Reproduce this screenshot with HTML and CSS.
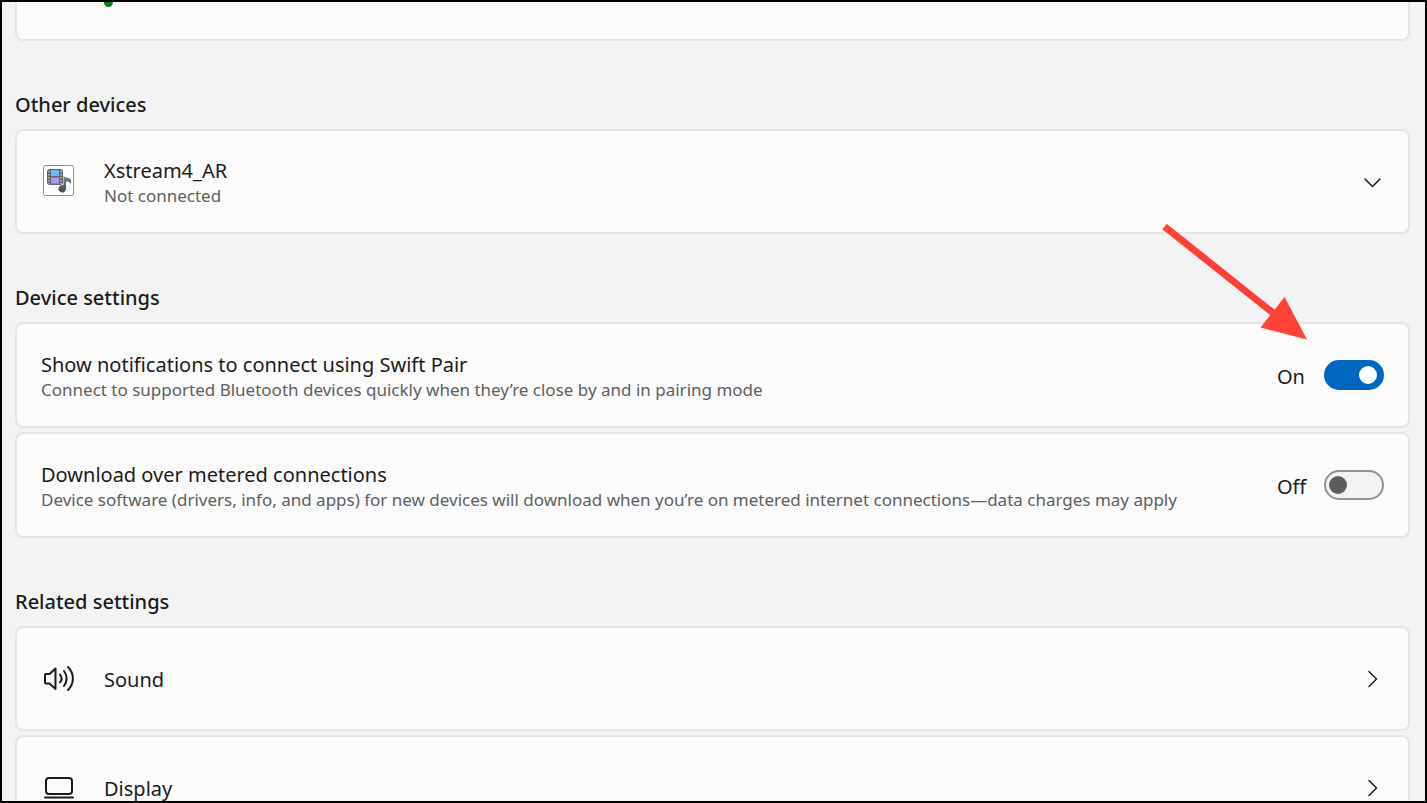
FILE: index.html
```html
<!DOCTYPE html>
<html lang="en">
<head>
<meta charset="UTF-8">
<meta name="viewport" content="width=device-width, initial-scale=1.0">
<title>Bluetooth &amp; devices</title>
<link rel="stylesheet" href="styles.css">
</head>
<body>

<main class="settings">
    <div class="card card-cut">
        <span class="status-dot"></span>
    </div>

    <section>
        <h2>Other devices</h2>
        <button class="card" type="button" aria-expanded="false">
            <svg class="icon" viewBox="0 0 36 36">
                <defs>
                    <linearGradient id="film" x1="0" y1="0" x2="1" y2="1">
                        <stop offset="0" stop-color="#4fc3f7"/>
                        <stop offset="1" stop-color="#7fb4ff"/>
                    </linearGradient>
                    <linearGradient id="film2" x1="0" y1="0" x2="1" y2="1">
                        <stop offset="0" stop-color="#8fa0ff"/>
                        <stop offset="1" stop-color="#cf8cf5"/>
                    </linearGradient>
                    <linearGradient id="note" x1="0" y1="0" x2="0" y2="1">
                        <stop offset="0" stop-color="#78858d"/>
                        <stop offset="1" stop-color="#3f4a52"/>
                    </linearGradient>
                </defs>
                <rect x="2.5" y="1.5" width="30" height="30" rx="2" fill="#fff" stroke="#8f8f8f"/>
                <rect x="6" y="5" width="16" height="16" rx="3" fill="#66666a"/>
                <rect x="10" y="6" width="8" height="6" fill="url(#film)"/>
                <rect x="10" y="13.5" width="8" height="6" fill="url(#film2)"/>
                <path d="M8 7v13M20 7v13" stroke="#b9b9b9" stroke-width="1.5" stroke-dasharray="1.5 1.5"/>
                <path d="M22.5 12c1.5 2 7 1.5 7.5 4v4c-1-2-3-2.500-5-2.500v7.500a3.800 3.800 0 1 1-2.500-3.800z" fill="url(#note)"/>
            </svg>
            <span class="text">
                <span class="title">Xstream4_AR</span>
                <span class="detail">Not connected</span>
            </span>
            <svg class="chevron" viewBox="0 0 24 24"><path d="M5 9l7.5 7.5 7.5-7.5"/></svg>
        </button>
    </section>

    <section>
        <h2>Device settings</h2>
        <div class="card card-toggle">
            <label class="text" for="swift-pair">
                <span class="title">Show notifications to connect using Swift Pair</span>
                <span class="detail">Connect to supported Bluetooth devices quickly when they’re close by and in pairing mode</span>
            </label>
            <span class="state">On</span>
            <input class="toggle" type="checkbox" role="switch" id="swift-pair" checked>
            <svg class="arrow" viewBox="0 0 146 116">
                <path d="M2.5 2.5L113 90.5" stroke="#ff4136" stroke-width="7"/>
                <path d="M145 115.5L98.5 103.5 122.5 73z" fill="#ff4136"/>
            </svg>
        </div>
        <div class="card card-toggle">
            <label class="text" for="metered">
                <span class="title">Download over metered connections</span>
                <span class="detail">Device software (drivers, info, and apps) for new devices will download when you’re on metered internet connections—data charges may apply</span>
            </label>
            <span class="state">Off</span>
            <input class="toggle" type="checkbox" role="switch" id="metered">
        </div>
    </section>

    <section>
        <h2>Related settings</h2>
        <a class="card" href="#sound">
            <svg class="icon line" viewBox="0 0 36 36">
                <path d="M4 14a1 1 0 0 1 1-1h3.500l6-5.500v20.500l-6-5.500H5a1 1 0 0 1-1-1z"/>
                <path d="M19 13.500c2 2.500 2 5.500 0 8M23 10c3.500 4.500 3.500 10.500 0 15M27 6c6.500 6.500 6.500 16.500 0 23"/>
            </svg>
            <span class="title">Sound</span>
            <svg class="chevron" viewBox="0 0 24 24"><path d="M9 4.500l7.500 7.500-7.500 7.500"/></svg>
        </a>
        <a class="card" href="#display">
            <svg class="icon line" viewBox="0 0 36 36">
                <rect x="5" y="8" width="26" height="16" rx="3"/>
                <path d="M4 27.500h28"/>
            </svg>
            <span class="title">Display</span>
            <svg class="chevron" viewBox="0 0 24 24"><path d="M9 4.500l7.500 7.500-7.500 7.500"/></svg>
        </a>
    </section>
</main>

</body>
</html>
```

FILE: styles.css
```css
* {
    box-sizing: border-box;
}
body {
    height: 100vh;
    margin: 0;
    overflow: hidden;
    border: 2px solid #000;
    background-color: #f3f3f3;
    color: #1b1b1b;
    font-family: "Segoe UI", "Noto Sans", sans-serif;
    font-size: 20px;
    line-height: 28px;
}
.settings {
    padding: 0 15px 0 13px;
}
h2 {
    margin: 50px 0 10px;
    font-size: 20px;
    font-weight: 500;
}
.card {
    position: relative;
    display: flex;
    align-items: center;
    width: 100%;
    min-height: 105px;
    padding: 0 24px;
    border: 2px solid #e5e5e5;
    border-radius: 8px;
    background-color: #fbfbfb;
    color: inherit;
    font: inherit;
    text-align: left;
    text-decoration: none;
}
.card + .card {
    margin-top: 4px;
}
.card-toggle {
    min-height: 106px;
}
/* card scrolled under the top edge */
.card-cut {
    align-items: flex-start;
    min-height: 39px;
    padding-left: 87px;
    border-top: 0;
    border-radius: 0 0 8px 8px;
    overflow: hidden;
}
.status-dot {
    width: 9px;
    height: 9px;
    margin-top: -4px;
    border-radius: 50%;
    background-color: #107c10;
}
.icon {
    flex: none;
    width: 36px;
    height: 36px;
    margin-right: 27px;
}
.line,
.chevron {
    fill: none;
    stroke: #1b1b1b;
    stroke-width: 2;
    stroke-linecap: round;
    stroke-linejoin: round;
}
.chevron {
    flex: none;
    width: 24px;
    height: 24px;
    margin-left: auto;
    stroke-width: 1.5;
}
.text {
    flex: 1;
}
.title,
.detail {
    display: block;
}
.detail {
    color: #606060;
    font-size: 17px;
    line-height: 22px;
}
.card-toggle .text,
a.card .title {
    padding-top: 2px;
}
.state {
    width: 47px;
    padding-top: 3px;
}
.toggle {
    appearance: none;
    flex: none;
    display: flex;
    align-items: center;
    width: 60px;
    height: 30px;
    margin: 0;
    padding: 0 3px;
    border: 2px solid #929292;
    border-radius: 15px;
    background-color: #f3f3f3;
}
.toggle::before {
    content: "";
    width: 18px;
    height: 18px;
    border-radius: 50%;
    background-color: #5d5d5d;
}
.toggle:checked {
    justify-content: flex-end;
    padding-right: 5px;
    border-color: #0067c0;
    background-color: #0067c0;
}
.toggle:checked::before {
    background-color: #fff;
}
/* pointer drawn over the cards */
.arrow {
    position: absolute;
    right: 100px;
    bottom: 86px;
    width: 146px;
    height: 116px;
    pointer-events: none;
}
```
